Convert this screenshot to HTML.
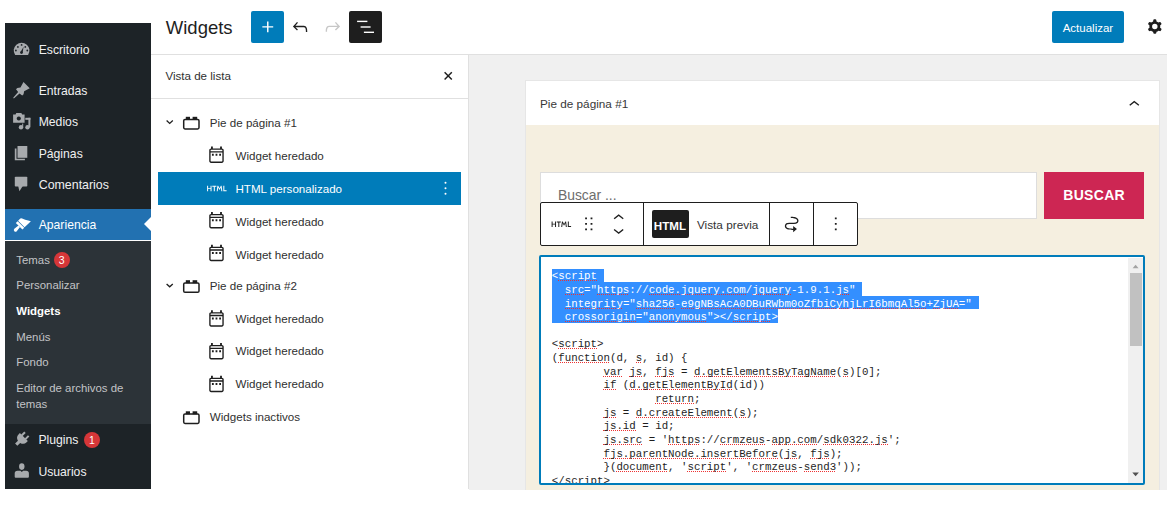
<!DOCTYPE html>
<html><head><meta charset="utf-8">
<style>
*{box-sizing:border-box;margin:0;padding:0}
html,body{width:1172px;height:506px;overflow:hidden;background:#fff;font-family:"Liberation Sans",sans-serif;position:relative}
.a{position:absolute}
.t{position:absolute;line-height:1;white-space:pre}
svg{position:absolute;overflow:visible}
u{text-decoration:none;background-image:repeating-linear-gradient(90deg,#e33 0 1px,transparent 1px 2px);background-size:100% 1px;background-repeat:no-repeat;background-position:0 calc(100% - 1px)}
#side{left:5px;top:23px;width:145.5px;height:466px;background:#1d2327}
.mi{font-size:12.2px;color:#f0f0f1}
.si{font-size:11.4px;color:#c3c4c7}
.badge{position:absolute;width:16px;height:16px;border-radius:8px;background:#d63638;color:#fff;font-size:10.5px;font-weight:normal;text-align:center;line-height:16px}
.li{font-size:11.6px;color:#303030}
</style></head><body>

<!-- sidebar -->
<div class="a" style="left:5px;top:23px;width:145.5px;height:186.2px;background:#1d2327"></div>
<div class="a" style="left:5px;top:209.2px;width:145.5px;height:31.3px;background:#2271b1"></div>
<div class="a" style="left:5px;top:240.5px;width:145.5px;height:0.7px;background:#1d2327"></div>
<div class="a" style="left:5px;top:241.2px;width:145.5px;height:182.4px;background:#2c3338"></div>
<div class="a" style="left:5px;top:423.6px;width:145.5px;height:65.2px;background:#1d2327"></div>
<div class="a" style="left:143.5px;top:217px;width:0;height:0;border-top:7.7px solid transparent;border-bottom:7.7px solid transparent;border-right:7.5px solid #fff"></div>

<div class="t mi" style="left:38.7px;top:43.7px">Escritorio</div>
<div class="t mi" style="left:38.7px;top:84.5px">Entradas</div>
<div class="t mi" style="left:38.7px;top:116.4px">Medios</div>
<div class="t mi" style="left:38.7px;top:147.8px">Páginas</div>
<div class="t mi" style="left:38.7px;top:178.8px;font-size:12.4px">Comentarios</div>
<div class="t mi" style="left:38.7px;top:219.3px;color:#fff">Apariencia</div>
<div class="t si" style="left:16.3px;top:254.6px">Temas</div>
<div class="badge" style="left:53.6px;top:252.2px">3</div>
<div class="t si" style="left:16.3px;top:280.1px">Personalizar</div>
<div class="t si" style="left:16.3px;top:306.4px;color:#fff;font-weight:bold">Widgets</div>
<div class="t si" style="left:16.3px;top:332px">Menús</div>
<div class="t si" style="left:16.3px;top:356.5px">Fondo</div>
<div class="t si" style="left:16.3px;top:382.9px">Editor de archivos de</div>
<div class="t si" style="left:16.3px;top:398.6px">temas</div>
<div class="t mi" style="left:38.4px;top:433.5px">Plugins</div>
<div class="badge" style="left:84px;top:432px">1</div>
<div class="t mi" style="left:38.4px;top:465.9px">Usuarios</div>

<!-- header -->
<div class="a" style="left:150.5px;top:54px;width:1016.5px;height:1px;background:#e0e0e0"></div>
<div class="t" style="left:165.8px;top:19.1px;font-size:18.5px;color:#1e1e1e">Widgets</div>
<div class="a" style="left:251.3px;top:10.7px;width:32.5px;height:32.3px;background:#007cba;border-radius:2px"></div>
<div class="a" style="left:1052px;top:10.7px;width:72px;height:32.3px;background:#007cba;border-radius:2px"></div>
<div class="t" style="left:1062.7px;top:22.8px;font-size:11.5px;color:#fff">Actualizar</div>
<div class="a" style="left:349.2px;top:10.7px;width:32.6px;height:32.3px;background:#1e1e1e;border-radius:2px"></div>

<!-- list panel -->
<div class="a" style="left:150.5px;top:55px;width:318.5px;height:434px;border-right:1px solid #e0e0e0"></div>
<div class="a" style="left:150.5px;top:98px;width:317px;height:1px;background:#e0e0e0"></div>
<div class="t li" style="left:165.4px;top:70.1px">Vista de lista</div>
<div class="a" style="left:158px;top:172px;width:302.7px;height:32.5px;background:#007cba"></div>

<div class="t li" style="left:209.8px;top:116.9px">Pie de página #1</div>
<div class="t li" style="left:235.5px;top:149.5px">Widget heredado</div>
<div class="t li" style="left:235.5px;top:183.1px;color:#fff">HTML personalizado</div>
<div class="t li" style="left:235.5px;top:215.8px">Widget heredado</div>
<div class="t li" style="left:235.5px;top:248.6px">Widget heredado</div>
<div class="t li" style="left:209.8px;top:280.3px">Pie de página #2</div>
<div class="t li" style="left:235.5px;top:312.6px">Widget heredado</div>
<div class="t li" style="left:235.5px;top:345.3px">Widget heredado</div>
<div class="t li" style="left:235.5px;top:378px">Widget heredado</div>
<div class="t li" style="left:209.8px;top:410.8px">Widgets inactivos</div>

<!-- canvas -->
<div class="a" style="left:469px;top:55px;width:698px;height:434.5px;background:#f0f0f0"></div>
<div class="a" style="left:524.5px;top:80px;width:635.5px;height:409.7px;background:#e6e6e6"></div>
<div class="a" style="left:525.5px;top:81px;width:633.5px;height:44.2px;background:#fff"></div>
<div class="a" style="left:525.5px;top:125.2px;width:633.5px;height:364.5px;background:#f5efe0"></div>
<div class="t" style="left:540px;top:98.1px;font-size:11.75px;color:#383838">Pie de página #1</div>

<div class="a" style="left:540px;top:172.4px;width:497px;height:46.6px;background:#fff;border:1px solid #dddddd"></div>
<div class="t" style="left:557.9px;top:189.1px;font-size:13.9px;color:#6d6d6d">Buscar ...</div>
<div class="a" style="left:1044.2px;top:172.4px;width:100px;height:46.8px;background:#cd2653"></div>
<div class="t" style="left:1063.3px;top:188.2px;font-size:14px;font-weight:bold;color:#fff;letter-spacing:0.3px">BUSCAR</div>

<div class="a" style="left:539.8px;top:202px;width:318.4px;height:43.5px;background:#fff;border:1px solid #1e1e1e;border-radius:2px"></div>
<div class="a" style="left:643px;top:203px;width:1px;height:41.5px;background:#1e1e1e"></div>
<div class="a" style="left:768.6px;top:203px;width:1px;height:41.5px;background:#1e1e1e"></div>
<div class="a" style="left:813px;top:203px;width:1px;height:41.5px;background:#1e1e1e"></div>
<div class="a" style="left:651.7px;top:209.6px;width:37.5px;height:28.4px;background:#1e1e1e;border-radius:2px"></div>
<div class="t" style="left:653.8px;top:220px;font-size:11.6px;font-weight:bold;color:#fff">HTML</div>
<div class="t" style="left:696.9px;top:219.5px;font-size:11.8px;color:#333">Vista previa</div>

<div class="a" style="left:539px;top:255.4px;width:606.2px;height:229.2px;background:#fff;border:2px solid #007cba;border-radius:2px"></div>


<!-- code -->
<div class="a" style="left:551.8px;top:268.55px;width:51.8px;height:13.56px;background:#338fff"></div>
<div class="a" style="left:551.8px;top:282.1px;width:310.6px;height:13.6px;background:#338fff"></div>
<div class="a" style="left:551.8px;top:295.7px;width:427px;height:13.55px;background:#338fff"></div>
<div class="a" style="left:551.8px;top:309.25px;width:226.5px;height:13.55px;background:#338fff"></div>
<div class="a" style="left:541px;top:257.5px;width:602px;height:225px;overflow:hidden">
<pre id="code" style="position:absolute;left:10.8px;top:12.7px;font-family:'Liberation Mono',monospace;font-size:10.78px;line-height:13.65px;color:#1e1e1e"><span style="color:#fff">&lt;<u>script</u></span>
<span style="color:#fff">  <u>src</u>=&quot;<u>https</u>://<u>code.jquery.com</u>/<u>jquery</u>-1.9.1.<u>js</u>&quot;</span>
<span style="color:#fff">  <u>integrity</u>=&quot;<u>sha256</u>-<u>e9gNBsAcA0DBuRWbm0oZfbiCyhjLrI6bmqAl5o</u>+<u>ZjUA</u>=&quot;</span>
<span style="color:#fff">  <u>crossorigin</u>=&quot;<u>anonymous</u>&quot;&gt;&lt;/<u>script</u>&gt;</span>

&lt;<u>script</u>&gt;
(<u>function</u>(d, <u>s</u>, id) {
        <u>var</u> <u>js</u>, <u>fjs</u> = <u>d.getElementsByTagName</u>(<u>s</u>)[0];
        <u>if</u> (<u>d.getElementById</u>(id))
                <u>return</u>;
        <u>js</u> = <u>d.createElement</u>(<u>s</u>);
        <u>js.id</u> = id;
        <u>js.src</u> = &#x27;<u>https</u>://<u>crmzeus</u>-<u>app.com</u>/<u>sdk0322.js</u>&#x27;;
        <u>fjs.parentNode.insertBefore</u>(<u>js</u>, <u>fjs</u>);
        }(<u>document</u>, &#x27;<u>script</u>&#x27;, &#x27;<u>crmzeus</u>-<u>send3</u>&#x27;));
&lt;/<u>script</u>&gt;</pre>
</div>
<div class="a" style="left:1128.3px;top:257.5px;width:14.5px;height:225px;background:#f0f0f0"></div>
<div class="a" style="left:1130px;top:273.2px;width:11.5px;height:73px;background:#c1c1c1"></div>

<!-- icons overlay -->
<svg style="left:0;top:0" width="1172" height="506" viewBox="0 0 1172 506">
 <!-- dashboard gauge -->
 <g fill="#a7aaad">
  <path d="M15.13 55 A7.85 7.85 0 1 1 28.07 55 Z"/>
 </g>
 <g fill="#1d2327">
  <circle cx="17.9" cy="46.9" r="0.9"/><circle cx="21.6" cy="44.9" r="0.9"/><circle cx="25.3" cy="46.9" r="0.9"/>
  <circle cx="15.9" cy="50.5" r="0.9"/><circle cx="27.3" cy="50.5" r="0.9"/>
  <path d="M20.4 52.2 L23.6 46.8 L22.6 52.6 Z"/>
  <circle cx="21.5" cy="52.6" r="1.4"/>
 </g>
 <!-- pin -->
 <g fill="#a7aaad" transform="translate(20.6 91) rotate(45)">
  <path d="M-4.3 -8.4 L4.5 -8.4 L2.6 -2.4 L4.4 0.2 L4.4 2.1 L1 2.5 L0.45 10 L-0.45 10 L-1 2.5 L-4.4 2.1 L-4.4 0.2 L-2.6 -2.4 Z"/>
 </g>
 <!-- media -->
 <g fill="#a7aaad">
  <path fill-rule="evenodd" d="M13.1 114.6 H15.6 L16.3 113.1 H21.4 L22.1 114.6 H24.6 V122.8 H13.1 Z M18.8 116.4 a2.1 2.1 0 1 0 0.01 0 Z"/>
  <circle cx="21" cy="127.2" r="2.2"/>
  <circle cx="27.5" cy="127.2" r="2.2"/>
  <rect x="22.2" y="123.6" width="1" height="3.5"/>
  <rect x="28.4" y="117.8" width="2" height="9.5"/>
  <rect x="25.3" y="117.8" width="5.1" height="2"/>
 </g>
 <!-- pages -->
 <g fill="#a7aaad">
  <rect x="17.5" y="146" width="9.8" height="11.8"/>
  <path d="M14.8 148.4 H16.5 V158.8 H24.9 V160.3 H14.8 Z"/>
 </g>
 <!-- comments -->
 <g fill="#a7aaad">
  <rect x="14.8" y="176.7" width="12.5" height="9.9" rx="0.8"/>
  <path d="M18.2 186 H22.8 L19.4 191.3 Z"/>
 </g>
 <!-- appearance brush -->
 <g fill="#fff" transform="translate(20.5 225) rotate(45)">
  <path d="M-4.7 -1.3 L-4.8 -3.8 Q-4.8 -5.2 -3.4 -5.7 Q0 -6.8 2.2 -8.6 L4.7 -10 L4.5 -1.3 Z"/>
  <rect x="-4.7" y="-0.7" width="9.3" height="2.6"/>
  <path d="M-1.1 1.8 L1.1 1.8 L1.7 7 A1.7 1.7 0 0 1 -1.7 7 Z"/>
 </g>
 <!-- plugin -->
 <g fill="#a7aaad" transform="translate(22.3 438.6) rotate(45)">
  <path d="M-5.6 -2.2 H5.6 V-0.5 A5.6 5.2 0 0 1 1.6 4.6 V8.6 H-1.6 V4.6 A5.6 5.2 0 0 1 -5.6 -0.5 Z"/>
  <rect x="-3.6" y="-6.4" width="2" height="4.6"/>
  <rect x="1.6" y="-6.4" width="2" height="4.6"/>
 </g>
 <!-- users -->
 <g fill="#a7aaad">
  <ellipse cx="21.8" cy="466.6" rx="2.7" ry="3.3"/>
  <path d="M14.7 473.4 Q14.7 471 17.5 470.8 L20.5 470.8 L21.8 472 L23.1 470.8 L26.1 470.8 Q28.9 471 28.9 473.4 L28.9 476.8 Q28.9 477.8 27.9 477.8 L15.7 477.8 Q14.7 477.8 14.7 476.8 Z"/>
 </g>

 <!-- header icons -->
 <g transform="translate(256.9 16) scale(0.906)" fill="#fff"><path d="M18 11.2h-5.2V6h-1.6v5.2H6v1.6h5.2V18h1.6v-5.2H18z"/></g>
 <g transform="translate(289.3 16) scale(0.906)" fill="#1e1e1e"><path d="M18.3 11.7c-.6-.6-1.4-.9-2.3-.9H6.7l2.9-3.3-1.1-1-4.5 5L8.5 16l1-1-2.7-2.7H16c.5 0 .9.2 1.3.5 1 1 1 3.4 1 4.5v.3h1.5v-.2c0-1.5 0-4.3-1.5-5.7z"/></g>
 <g transform="translate(321.8 16) scale(0.906)" fill="#c7c7c7"><path d="M15.6 6.5l-1.1 1 2.9 3.3H8c-.9 0-1.7.3-2.3.9-1.4 1.5-1.4 4.2-1.4 5.6v.2h1.5v-.3c0-1.1 0-3.5 1-4.5.3-.3.7-.5 1.3-.5h9.2L14.5 15l1.1 1.1 4.6-4.6-4.6-5z"/></g>
 <g fill="#fff">
  <rect x="357.1" y="20.7" width="10.3" height="1.4"/>
  <rect x="360.6" y="26.3" width="10" height="1.4"/>
  <rect x="363.9" y="31.6" width="10.1" height="1.4"/>
 </g>
 <g transform="translate(1144.0 15.7) scale(0.906)" fill="#1e1e1e"><path fill-rule="evenodd" d="M10.289 4.836A1 1 0 0111.275 4h1.306a1 1 0 01.987.836l.244 1.466c.787.26 1.503.679 2.108 1.218l1.393-.522a1 1 0 011.216.437l.653 1.13a1 1 0 01-.23 1.273l-1.148.944a6.025 6.025 0 010 2.435l1.149.946a1 1 0 01.23 1.272l-.653 1.13a1 1 0 01-1.216.437l-1.394-.522c-.605.54-1.32.958-2.108 1.218l-.244 1.466a1 1 0 01-.987.836h-1.306a1 1 0 01-.986-.836l-.244-1.466a5.995 5.995 0 01-2.108-1.218l-1.394.522a1 1 0 01-1.217-.436l-.653-1.131a1 1 0 01.23-1.272l1.149-.946a6.026 6.026 0 010-2.435l-1.148-.944a1 1 0 01-.23-1.272l.653-1.131a1 1 0 011.217-.437l1.393.522a5.994 5.994 0 012.108-1.218l.244-1.466zM14.929 12a3 3 0 11-6 0 3 3 0 016 0z"/></g>

 <!-- list view panel icons -->
 <g stroke="#1e1e1e" stroke-width="1.5" fill="none"><path d="M444.6 72.3 L451.8 79.5 M451.8 72.3 L444.6 79.5"/></g>
 <g stroke="#1e1e1e" stroke-width="1.3" fill="none">
  <path d="M166.6 120.6 L169.7 123.4 L172.8 120.6"/>
  <path d="M166.6 284.0 L169.7 286.8 L172.8 284.0"/>
 </g>
 <g id="wa" fill="none" stroke="#1e1e1e" stroke-width="1.5">
  <rect x="183.7" y="119.5" width="15.3" height="9.4" rx="1.3"/>
 </g>
 <g fill="#1e1e1e">
  <rect x="185.8" y="116.8" width="4.2" height="3"/>
  <rect x="192.6" y="116.8" width="4.6" height="3"/>
 </g>
 <g fill="none" stroke="#1e1e1e" stroke-width="1.5">
  <rect x="183.7" y="282.9" width="15.3" height="9.4" rx="1.3"/>
  <rect x="183.7" y="414" width="15.3" height="9.4" rx="1.3"/>
 </g>
 <g fill="#1e1e1e">
  <rect x="185.8" y="280.2" width="4.2" height="3"/><rect x="192.6" y="280.2" width="4.6" height="3"/>
  <rect x="185.8" y="411.3" width="4.2" height="3"/><rect x="192.6" y="411.3" width="4.6" height="3"/>
 </g>
 <defs>
  <path id="widgetI" d="M6 3H8V5H16V3H18V5C19.1046 5 20 5.89543 20 7V19C20 20.1046 19.1046 21 18 21H6C4.89543 21 4 20.1046 4 19V7C4 5.89543 4.89543 5 6 5V3ZM18 6.5H6C5.72386 6.5 5.5 6.72386 5.5 7V8H18.5V7C18.5 6.72386 18.2761 6.5 18 6.5ZM18.5 9.5H5.5V19C5.5 19.2761 5.72386 19.5 6 19.5H18C18.2761 19.5 18.5 19.2761 18.5 19V9.5ZM11 11H13V13H11V11ZM7 11V13H9V11H7ZM15 13V11H17V13H15Z"/>
  <path id="htmlI" d="M4.8 11.4H2.1V9H1v6h1.1v-2.6h2.7V15h1.1V9H4.8v2.4zm1.9-1.3h1.7V15h1.1v-4.9h1.7V9H6.7v1.1zM16.2 9l-1.5 2.7L13.3 9h-.9l-.8 6h1.1l.5-4 1.5 2.8 1.5-2.8.5 4h1.1L17 9h-.8zm3.8 5V9h-1.1v6h3.6v-1H20z"/>
 </defs>
 <g fill="#1e1e1e">
  <use href="#widgetI" transform="translate(205.6 143.9) scale(0.906)"/>
  <use href="#widgetI" transform="translate(205.6 209.4) scale(0.906)"/>
  <use href="#widgetI" transform="translate(205.6 242.1) scale(0.906)"/>
  <use href="#widgetI" transform="translate(205.6 307.6) scale(0.906)"/>
  <use href="#widgetI" transform="translate(205.6 340.4) scale(0.906)"/>
  <use href="#widgetI" transform="translate(205.6 373.1) scale(0.906)"/>
 </g>
 <use href="#htmlI" fill="#fff" transform="translate(206.2 177.6) scale(0.906)"/>
 <g fill="#fff"><circle cx="445.5" cy="182.8" r="1"/><circle cx="445.5" cy="188.3" r="1"/><circle cx="445.5" cy="193.8" r="1"/></g>

 <!-- card chevron up -->
 <g transform="translate(1123.4 93.5) scale(0.906)" fill="#1e1e1e"><path d="M6.5 12.4L12 8l5.5 4.4-.9 1.2L12 10l-4.5 3.6-1-1.2z"/></g>

 <!-- toolbar -->
 <use href="#htmlI" fill="#1e1e1e" transform="translate(550.7 213.3) scale(0.906)"/>
 <g transform="translate(577.9 213) scale(0.906)" fill="#1e1e1e"><path d="M8 7h2V5H8v2zm0 6h2v-2H8v2zm0 6h2v-2H8v2zm6-14v2h2V5h-2zm0 8h2v-2h-2v2zm0 6h2v-2h-2v2z"/></g>
 <g transform="translate(607.8 207.05) scale(0.906)" fill="#1e1e1e"><path d="M6.5 12.4L12 8l5.5 4.4-.9 1.2L12 10l-4.5 3.6-1-1.2z"/></g>
 <g transform="translate(607.8 219.5) scale(0.906)" fill="#1e1e1e"><path d="M17.5 11.6L12 16l-5.5-4.4.9-1.2L12 14l4.5-3.6 1 1.2z"/></g>
 <g transform="translate(781.1 212.8) scale(0.88)" fill="#1e1e1e"><path d="M19.75 9c0-1.257-.565-2.197-1.39-2.858-.797-.64-1.827-1.017-2.815-1.247-1.802-.42-3.703-.403-4.383-.396L11 4.5V6l.177-.001c.696-.006 2.416-.02 4.028.356.887.207 1.67.518 2.216.957.52.416.829.945.829 1.688 0 .592-.167.966-.407 1.23-.255.281-.656.508-1.236.674-1.19.34-2.820.346-4.607.346h-.077c-1.692 0-3.527 0-4.942.404-.732.209-1.424.545-1.935 1.108-.526.579-.796 1.330-.796 2.238 0 1.257.565 2.197 1.39 2.858.797.64 1.827 1.017 2.815 1.247 1.802.42 3.703.403 4.383.396L13 19.5h.714V22L18 18.5 13.714 15v3H13l-.177.001c-.696.006-2.416.02-4.028-.356-.887-.207-1.67-.518-2.216-.957-.52-.416-.829-.945-.829-1.688 0-.592.167-.966.407-1.23.255-.281.656-.508 1.237-.674 1.189-.34 2.819-.346 4.606-.346h.077c1.692 0 3.527 0 4.941-.404.733-.209 1.425-.545 1.936-1.108.526-.579.796-1.330.796-2.238z"/></g>
 <g transform="translate(824.9 213) scale(0.906)" fill="#1e1e1e"><path d="M13 19h-2v-2h2v2zm0-6h-2v-2h2v2zm0-6h-2V5h2v2z"/></g>

 <!-- scrollbar arrows -->
 <path d="M1132.6 268.2 L1135.6 264.8 L1138.6 268.2 Z" fill="#a3a3a3"/>
 <path d="M1132.3 472.6 L1135.6 476.2 L1138.9 472.6 Z" fill="#505050"/>
</svg>
</body></html>
